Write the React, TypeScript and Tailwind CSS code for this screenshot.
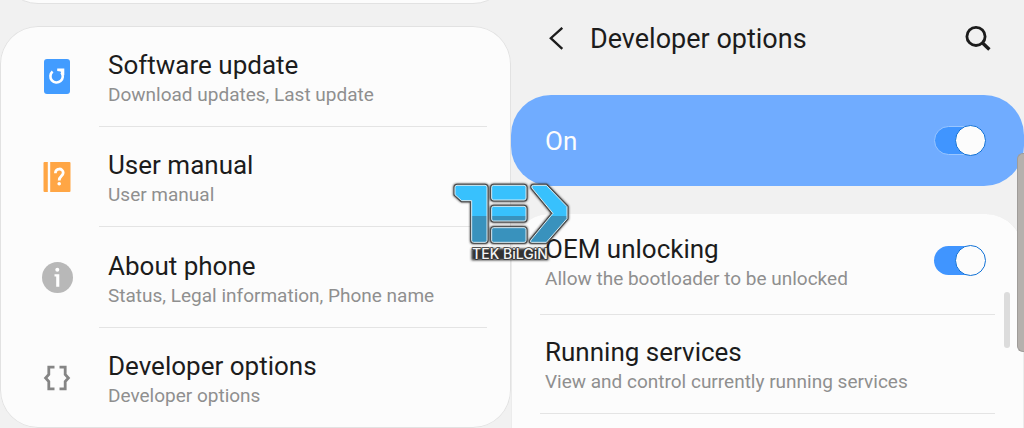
import type { ReactNode } from "react";

type Item = {
  title: string;
  summary: string;
  icon: ReactNode;
};

function UpdateIcon() {
  return (
    <svg width="26" height="35" viewBox="0 0 26 35" aria-hidden="true">
      <rect width="26" height="35" rx="3" fill="#429cff" />
      <path
        d="M8.6 12.6A6.2 6.2 0 1 0 17.4 13.4"
        fill="none"
        stroke="#fff"
        strokeWidth="2.6"
      />
      <path d="M13.2 9.4H20.3V16.2H17.9L16.6 12.6L13.2 12Z" fill="#fff" />
    </svg>
  );
}

function ManualIcon() {
  return (
    <svg width="28" height="30" viewBox="0 0 28 30" aria-hidden="true">
      <path d="M1.5 0H4.8V30H1.5Q.5 30 .5 29V1Q.5 0 1.5 0Z" fill="#ffa645" />
      <path
        d="M7.2 0H26.5Q27.5 0 27.5 1V29Q27.5 30 26.5 30H7.2Z"
        fill="#ffa645"
      />
      <path
        d="M12.4 11.2C12.4 5.6 20.2 5.8 20.2 10.8C20.2 14.2 16.2 14 16.2 18.4"
        fill="none"
        stroke="#fff"
        strokeWidth="2.8"
      />
      <circle cx="16.2" cy="21.8" r="1.8" fill="#fff" />
    </svg>
  );
}

function InfoIcon() {
  return (
    <svg width="31" height="31" viewBox="0 0 31 31" aria-hidden="true">
      <circle cx="15.5" cy="15.5" r="15.5" fill="#b8b8b8" />
      <circle cx="15.3" cy="7.8" r="2" fill="#fff" />
      <path d="M12.5 12.2H17.3V24.8H14.2V14.4H12.5Z" fill="#fff" />
    </svg>
  );
}

function BracesIcon() {
  return (
    <svg
      width="28"
      height="26"
      viewBox="0 0 28 26"
      fill="none"
      stroke="#858585"
      strokeWidth="2.8"
      aria-hidden="true"
    >
      <path d="M11.5 2.2H5.8V9.5L2.6 13L5.8 16.5V23.8H11.5" />
      <path d="M16.5 2.2H22.2V9.5L25.4 13L22.2 16.5V23.8H16.5" />
    </svg>
  );
}

const items: Item[] = [
  {
    title: "Software update",
    summary: "Download updates, Last update",
    icon: <UpdateIcon />,
  },
  { title: "User manual", summary: "User manual", icon: <ManualIcon /> },
  {
    title: "About phone",
    summary: "Status, Legal information, Phone name",
    icon: <InfoIcon />,
  },
  {
    title: "Developer options",
    summary: "Developer options",
    icon: <BracesIcon />,
  },
];

function RowText({ title, summary }: { title: string; summary: string }) {
  return (
    <span className="block whitespace-nowrap">
      <span className="block text-[26px] leading-[38px] text-[#1c1c1c]">
        {title}
      </span>
      <span className="block text-[19px] leading-[22px] text-[#8f8f8f]">
        {summary}
      </span>
    </span>
  );
}

function Switch({ id, outlined }: { id: string; outlined?: boolean }) {
  return (
    <input
      id={id}
      type="checkbox"
      role="switch"
      defaultChecked
      className={`relative h-[31px] w-[52px] shrink-0 appearance-none before:absolute before:inset-y-px before:left-0 before:w-[46px] before:rounded-full before:bg-[#bdbdbd] checked:before:bg-[#4095ff] after:absolute after:left-0 after:top-0 after:size-[31px] after:rounded-full after:border after:border-[#1272d6] after:bg-[#fcfcfc] checked:after:left-[21px] ${
        outlined ? "before:border before:border-[#9ac6ff]" : ""
      }`}
    />
  );
}

const logoShapes = [
  "M48 46H132Q138 46 138 52V211Q138 217 132 217H98Q92 217 92 211V92H62L42 74V52Q42 46 48 46Z",
  "M158 46H249Q255 46 255 52V84Q255 90 249 90H158Q152 90 152 84V52Q152 46 158 46Z",
  "M158 109H249Q255 109 255 115V147Q255 153 249 153H158Q152 153 152 147V115Q152 109 158 109Z",
  "M158 173H249Q255 173 255 179V211Q255 217 249 217H158Q152 217 152 211V179Q152 173 158 173Z",
  "M278 46H316L378 110V146L316 217H272Q265 217 270 210L336 130L273 54Q270 46 278 46Z",
];

function Logo() {
  return (
    <svg
      width="122"
      height="86"
      viewBox="30 30 366 258"
      role="img"
      aria-label="Tek Bilgin"
    >
      <defs>
        <linearGradient
          id="logo-fill"
          gradientUnits="userSpaceOnUse"
          x1="0"
          y1="46"
          x2="0"
          y2="217"
        >
          <stop offset="0.54" stopColor="#38c1fd" />
          <stop offset="0.54" stopColor="#3992bd" />
        </linearGradient>
        <filter id="logo-shadow" x="-10%" y="-10%" width="120%" height="120%">
          <feGaussianBlur stdDeviation="3" />
        </filter>
      </defs>
      <g fill="#333" stroke="#333" filter="url(#logo-shadow)">
        {logoShapes.map((d) => (
          <path key={d} d={d} strokeWidth="10" />
        ))}
        <path d="M94 238H320V268H94Z" strokeWidth="5" />
      </g>
      {logoShapes.map((d) => (
        <path key={d} d={d} fill="#333" stroke="#4a4a4a" strokeWidth="9" />
      ))}
      {logoShapes.map((d) => (
        <path
          key={d}
          d={d}
          fill="url(#logo-fill)"
          stroke="#d9edf5"
          strokeWidth="3"
        />
      ))}
      <text
        x="207"
        y="267"
        textAnchor="middle"
        fontFamily="Inter, sans-serif"
        fontSize="42"
        fontWeight="500"
        fill="#f4f4f4"
        stroke="#333"
        strokeWidth="4"
        paintOrder="stroke"
      >
        TEK BiLGiN
      </text>
    </svg>
  );
}

function SettingsPanel() {
  return (
    <section className="flex flex-col" aria-label="Settings">
      <div className="h-[26px] overflow-hidden">
        <div className="-mt-20 h-[84px] rounded-[38px] border border-[#e2e2e2] bg-[#fcfcfc]" />
      </div>
      <ul className="flex flex-1 flex-col rounded-[38px] bg-[#fcfcfc] inset-ring inset-ring-[#e2e2e2]">
        {items.map((item) => (
          <li key={item.title} className="group flex flex-1">
            <a href="#" className="flex flex-1">
              <span className="flex w-[99px] shrink-0 items-center pl-[41px]">
                <span className="flex w-8 justify-center">{item.icon}</span>
              </span>
              <span className="mr-6 flex flex-1 items-center border-b border-[#e4e4e4] py-4 pl-[9px] group-last:border-transparent">
                <RowText title={item.title} summary={item.summary} />
              </span>
            </a>
          </li>
        ))}
      </ul>
    </section>
  );
}

function DeveloperPanel() {
  return (
    <section className="flex flex-col" aria-label="Developer options">
      <header className="flex h-[95px] items-center pb-[18px] pl-[37px] pr-8">
        <button type="button" aria-label="Back" className="mr-[26px]">
          <svg
            width="16"
            height="24"
            viewBox="0 0 16 24"
            fill="none"
            stroke="#1c1c1c"
            strokeWidth="2.3"
          >
            <path d="M14.3 .8L2.8 11.2L14.3 21.8" />
          </svg>
        </button>
        <h1 className="flex-1 whitespace-nowrap text-[27px] leading-[38px] text-[#1c1c1c]">
          Developer options
        </h1>
        <button type="button" aria-label="Search">
          <svg
            width="28"
            height="28"
            viewBox="0 0 28 28"
            fill="none"
            stroke="#1c1c1c"
          >
            <circle cx="12" cy="11.4" r="9.1" strokeWidth="2.8" />
            <path d="M18.3 17.8L25.4 24.6" strokeWidth="3.4" />
          </svg>
        </button>
      </header>
      <div className="flex h-[91px] items-center justify-between rounded-[40px] bg-[#70acff] pl-[34px] pr-[38px]">
        <label
          htmlFor="developer-on"
          className="text-[26px] leading-[38px] text-[#fcfcfc]"
        >
          On
        </label>
        <Switch id="developer-on" outlined />
      </div>
      <div className="mt-7 flex-1 rounded-t-[38px] border-x border-[#ececec] bg-[#fcfcfc] px-7">
        <div className="flex items-center justify-between border-b border-[#e4e4e4] pb-6 pl-[5px] pr-[9px] pt-4">
          <label htmlFor="oem-unlocking">
            <RowText
              title="OEM unlocking"
              summary="Allow the bootloader to be unlocked"
            />
          </label>
          <Switch id="oem-unlocking" />
        </div>
        <a
          href="#"
          className="block border-b border-[#e4e4e4] pb-5 pl-[5px] pt-[18px]"
        >
          <RowText
            title="Running services"
            summary="View and control currently running services"
          />
        </a>
      </div>
    </section>
  );
}

export default function App() {
  return (
    <main className="relative grid min-h-screen grid-cols-[511fr_513fr] overflow-hidden bg-[#f1f1f1] font-[Roboto,sans-serif]">
      <SettingsPanel />
      <DeveloperPanel />
      {/* scroll thumb and edge panel handle */}
      <div className="absolute right-[14px] top-[292px] h-14 w-[6px] rounded-full bg-[#dcdcdc]" />
      <div className="absolute right-0 top-[153px] h-[199px] w-[7px] rounded-l-[6px] border border-r-0 border-[#9f9c99] bg-[#b5b1ad]" />
      <div className="pointer-events-none absolute left-1/2 top-[180px] -translate-x-1/2">
        <Logo />
      </div>
    </main>
  );
}
